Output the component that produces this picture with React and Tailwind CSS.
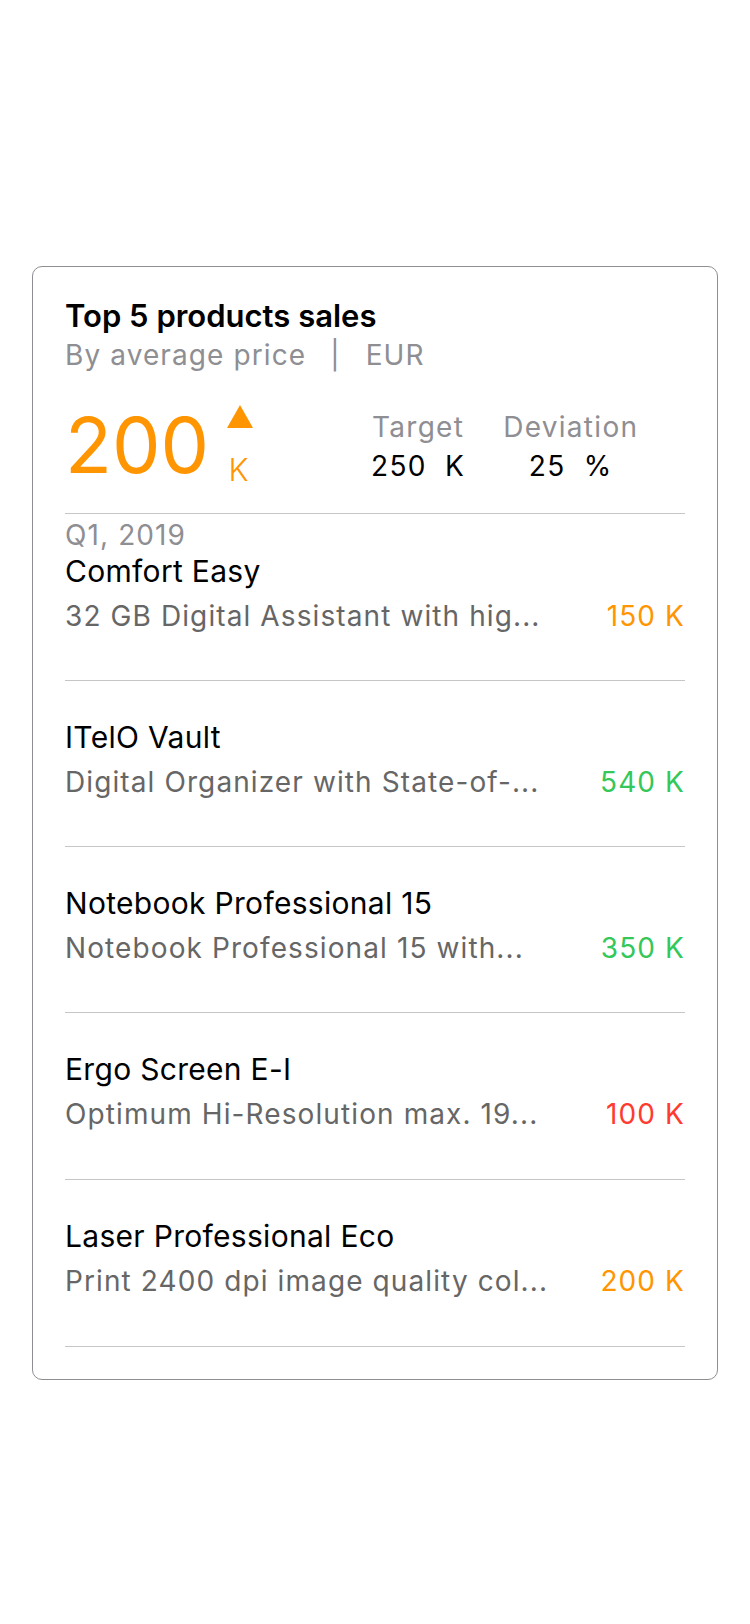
import React from "react";

const rows = [
  { name: "Comfort Easy", desc: "32 GB Digital Assistant with hig...", value: "150 K", color: "text-[#ff9500]", header: "Q1, 2019" },
  { name: "ITelO Vault", desc: "Digital Organizer with State-of-...", value: "540 K", color: "text-[#34c759]" },
  { name: "Notebook Professional 15", desc: "Notebook Professional 15 with...", value: "350 K", color: "text-[#34c759]" },
  { name: "Ergo Screen E-I", desc: "Optimum Hi-Resolution max. 19...", value: "100 K", color: "text-[#ff3b30]" },
  { name: "Laser Professional Eco", desc: "Print 2400 dpi image quality col...", value: "200 K", color: "text-[#ff9500]" },
];

export default function App() {
  return (
    <div className="min-h-[1624px] w-[750px] bg-white pt-[266px] pl-[32px] font-['Inter','Liberation_Sans',sans-serif]">
      <div className="w-[686px] rounded-[10px] border border-[#8e8e93] px-[32px] pt-[30px] pb-[32px]">
        <div className="text-[31px] leading-[38px] font-semibold text-black">Top 5 products sales</div>
        <div className="mt-[3px] flex text-[28px] leading-[34px] tracking-[1.1px] text-[#8e8e93]">
          <span>By average price</span>
          <span className="ml-[24px]">|</span>
          <span className="ml-[25px]">EUR</span>
        </div>
        <div className="mt-[33px] flex h-[108px] items-start">
          <div className="flex w-[306px] items-start">
            <span className="mt-[2px] text-[77px] leading-[77px] text-[#ff9500]">200</span>
            <div className="ml-[18px] flex flex-col items-center">
              <svg width="26" height="23" viewBox="0 0 26 23">
                <polygon points="13,0 26,23 0,23" fill="#ff9500" />
              </svg>
              <span className="mt-[24px] mr-[3px] text-[31px] leading-[36px] font-light text-[#ff9500]">K</span>
            </div>
          </div>
          <div className="mt-[5px] flex gap-[38px] text-[28px] leading-[34px] tracking-[1.3px]">
            <div className="flex flex-col items-center">
              <span className="text-[#8e8e93]">Target</span>
              <span className="mt-[5px] text-black">250&nbsp; K</span>
            </div>
            <div className="flex flex-col items-center">
              <span className="text-[#8e8e93]">Deviation</span>
              <span className="mt-[5px] text-black">25&nbsp; %</span>
            </div>
          </div>
        </div>
        <div>
          {rows.map((r, i) => (
            <div key={i} className="border-t border-[#c6c6c8]">
              {r.header ? (
                <div className="pt-[4px] pb-[1px] text-[28px] leading-[34px] tracking-[1.1px] text-[#8e8e93]">{r.header}</div>
              ) : (
                <div className="h-[38px]" />
              )}
              <div className="text-[30px] leading-[36px] tracking-[0.3px] text-black">{r.name}</div>
              <div className={"mt-[10px] flex justify-between text-[28px] leading-[34px] tracking-[1.1px] " + (i >= 3 ? "pb-[48px]" : "pb-[47px]")}>
                <span className="whitespace-nowrap text-[#666666]">{r.desc}</span>
                <span className={r.color}>{r.value}</span>
              </div>
            </div>
          ))}
          <div className="border-t border-[#c6c6c8]" />
        </div>
      </div>
    </div>
  );
}
